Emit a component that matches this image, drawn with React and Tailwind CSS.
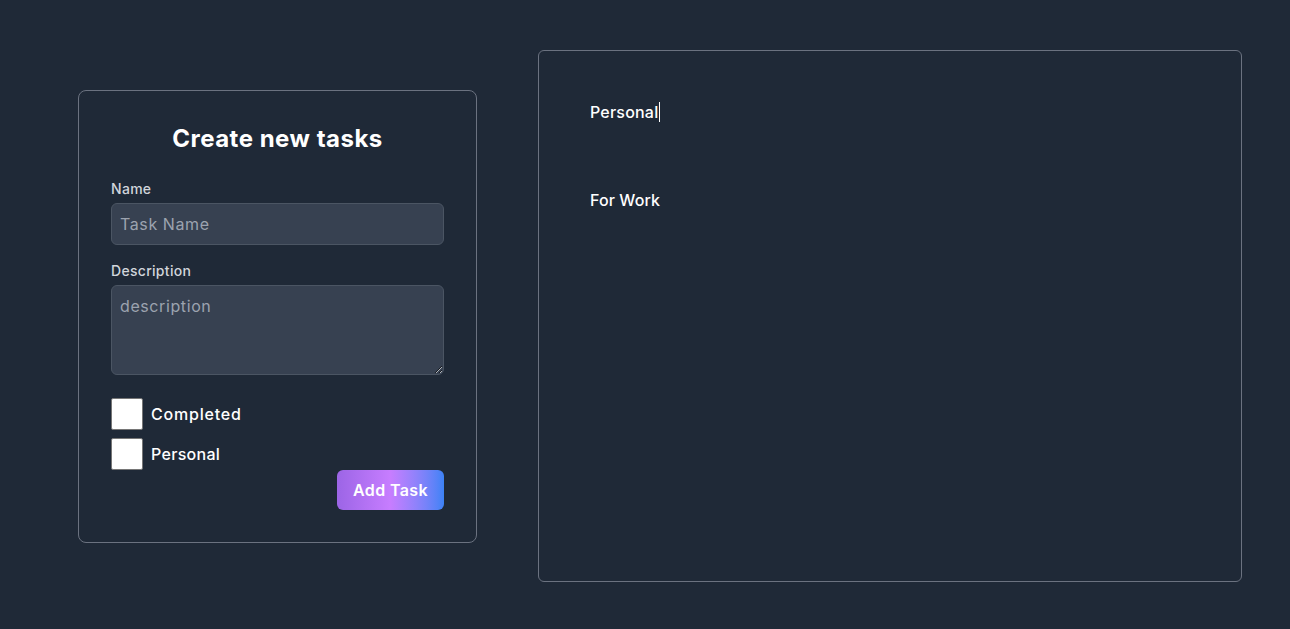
import React from "react";

export default function App() {
  const font = { fontFamily: "Inter, 'Open Sans', sans-serif" };
  return (
    <div className="min-h-[629px] w-full bg-[#1f2937] flex items-start pl-[78px] gap-[61px] text-white" style={font}>
      <div className="mt-[90px] w-[399px] h-[453px] border border-[#6b7280] rounded-lg px-[32px] pt-[32px] flex flex-col">
        <h1 className="text-[24px] leading-[32px] font-bold text-center tracking-[0.5px]">Create new tasks</h1>
        <label className="mt-[24px] text-[14px] leading-[20px] font-medium text-[#d1d5db] tracking-[0.3px]">Name</label>
        <input
          className="mt-[4px] h-[42px] w-full rounded-md bg-[#374151] border border-[#4b5563] px-[8px] text-[16px] tracking-[0.6px] placeholder:text-[#9ca3af] outline-none"
          placeholder="Task Name"
        />
        <label className="mt-[16px] text-[14px] leading-[20px] font-medium text-[#d1d5db] tracking-[0.3px]">Description</label>
        <textarea
          className="mt-[4px] h-[90px] w-full rounded-md bg-[#374151] border border-[#4b5563] px-[8px] py-[8px] text-[16px] leading-[24px] tracking-[0.6px] placeholder:text-[#9ca3af] outline-none"
          placeholder="description"
        />
        <div className="mt-[23px] flex items-center gap-[8px]">
          <div className="w-[32px] h-[32px] bg-white border border-[#767676] rounded-[2px]" />
          <span className="text-[16px] font-medium tracking-[0.8px]">Completed</span>
        </div>
        <div className="mt-[8px] flex items-center gap-[8px]">
          <div className="w-[32px] h-[32px] bg-white border border-[#767676] rounded-[2px]" />
          <span className="text-[16px] font-medium tracking-[0.3px]">Personal</span>
        </div>
        <div className="flex justify-end">
          <button className="w-[107px] h-[40px] rounded-md bg-gradient-to-r from-[#9c65e6] via-[#c77dff] to-[#3b82f6] text-[16px] font-semibold text-white tracking-[0.4px]">
            Add Task
          </button>
        </div>
      </div>
      <div className="mt-[50px] w-[704px] h-[532px] border border-[#6b7280] rounded-md pl-[51px] pt-[51px]">
        <div className="flex items-center h-[20px]">
          <span className="text-[16px] font-medium tracking-[0.2px]">Personal</span>
          <span className="w-px h-[20px] bg-white ml-[1px]" />
        </div>
        <div className="mt-[66px] text-[16px] font-medium tracking-[0.1px]">For Work</div>
      </div>
    </div>
  );
}
